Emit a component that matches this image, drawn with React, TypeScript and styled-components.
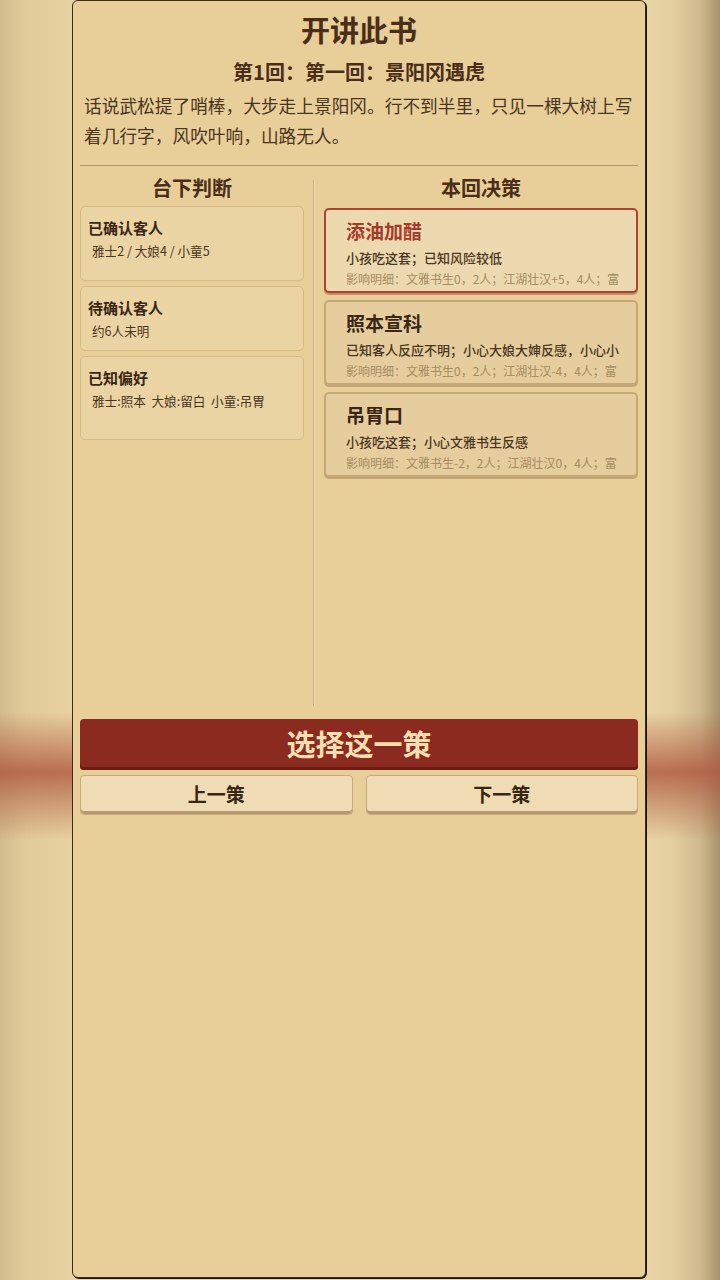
import React from "react";
import styled, { createGlobalStyle } from "styled-components";

const GlobalStyle = createGlobalStyle`
  html, body {
    margin: 0;
    padding: 0;
  }
  body {
    font-family: "Noto Sans CJK SC", "Noto Sans", sans-serif;
    color: #3f2a16;
  }
`;

const Page = styled.div`
  width: 720px;
  height: 1280px;
  overflow: hidden;
  background:
    linear-gradient(
      180deg,
      rgba(176, 88, 62, 0) 0px,
      rgba(176, 88, 62, 0) 712px,
      rgba(172, 82, 58, 0.78) 772px,
      rgba(176, 88, 62, 0) 840px,
      rgba(176, 88, 62, 0) 1280px
    ),
    linear-gradient(
      90deg,
      #d2bb8c 0px,
      #e2cb9b 26px,
      #e8d2a2 72px,
      #e9d4a5 646px,
      #e4cfa0 672px,
      #cfb98d 700px,
      #a8926a 720px
    );
`;

const Panel = styled.div`
  box-sizing: border-box;
  width: 574px;
  height: 1278px;
  margin: 0 0 0 72px;
  padding: 0 7px;
  background: #e8ce99;
  border: 1px solid #3d2a18;
  border-radius: 6px;
  box-shadow: 1px 1px 0 #1e140a;
  display: flex;
  flex-direction: column;
`;

const Title = styled.h1`
  margin: 10px 0 0;
  font-size: 29px;
  line-height: 36px;
  font-weight: 700;
  text-align: center;
  color: #4a2e18;
`;

const Subtitle = styled.h2`
  margin: 11px 0 0;
  font-size: 20px;
  line-height: 28px;
  font-weight: 700;
  text-align: center;
  color: #4a2e18;
`;

const Story = styled.p`
  margin: 4px 0 0;
  padding: 0 0 0 4px;
  font-size: 17.7px;
  line-height: 30px;
  color: #4a3520;
`;

const Rule = styled.hr`
  margin: 15px 0 0;
  border: none;
  height: 1px;
  background: #ab936b;
`;

const Columns = styled.div`
  display: grid;
  grid-template-columns: 224px 20px 314px;
  height: 530px;
  margin-top: 10px;
`;

const Column = styled.div<{ $gap: number }>`
  display: flex;
  flex-direction: column;
  gap: ${(p) => p.$gap}px;
`;

const Divider = styled.div`
  justify-self: center;
  width: 2px;
  margin-top: 4px;
  background: linear-gradient(90deg, #cfb282 0 1px, #ecd9ad 1px 2px);
`;

const ColumnHead = styled.h3`
  margin: 0 0 1px;
  font-size: 20px;
  line-height: 24px;
  font-weight: 700;
  text-align: center;
  color: #4a2e18;
`;

const InfoCard = styled.div<{ $minHeight: number }>`
  box-sizing: border-box;
  min-height: ${(p) => p.$minHeight}px;
  padding: 11px 7px 8px;
  background: #ebd4a3;
  border: 1px solid #d7bb87;
  border-radius: 5px;
`;

const InfoTitle = styled.div`
  font-size: 15px;
  line-height: 20px;
  font-weight: 700;
  color: #3a2614;
`;

const InfoBody = styled.div`
  margin-top: 4px;
  padding-left: 4px;
  font-size: 12.6px;
  line-height: 18px;
  color: #4a3520;
  white-space: pre;
`;

const PlanCard = styled.div<{ $selected?: boolean }>`
  box-sizing: border-box;
  height: 85px;
  padding: 9px 14px 0 20px;
  border-radius: 5px;
  border: 2px solid ${(p) => (p.$selected ? "#a9472e" : "#c5a878")};
  background: ${(p) => (p.$selected ? "#ecd9b0" : "#e5cd9d")};
  box-shadow: 0 2px 0 ${(p) => (p.$selected ? "#c98a66" : "#c2a676")};
  overflow: hidden;
`;

const PlanTitle = styled.div<{ $selected?: boolean }>`
  font-size: 19px;
  line-height: 24px;
  font-weight: 700;
  color: ${(p) => (p.$selected ? "#a63a28" : "#3a2614")};
`;

const PlanLine = styled.div<{ $muted?: boolean }>`
  margin-top: ${(p) => (p.$muted ? 4 : 6)}px;
  font-size: ${(p) => (p.$muted ? 12 : 13)}px;
  line-height: ${(p) => (p.$muted ? 16 : 18)}px;
  font-weight: ${(p) => (p.$muted ? 400 : 500)};
  color: ${(p) => (p.$muted ? "#a68c60" : "#4a3520")};
  white-space: nowrap;
`;

const PrimaryButton = styled.button`
  margin-top: 13px;
  height: 51px;
  border: none;
  border-radius: 4px;
  background: #8b2a1e;
  box-shadow: inset 0 -3px 0 #6a1d13;
  color: #f7dfb3;
  font-family: inherit;
  font-size: 29px;
  font-weight: 700;
  padding: 0 0 3px;
`;

const ButtonRow = styled.div`
  display: grid;
  grid-template-columns: 1fr 1fr;
  gap: 13px;
  margin-top: 5px;
`;

const SecondaryButton = styled.button`
  height: 40px;
  border: 1px solid #c6ab7c;
  border-radius: 4px;
  background: #efdcb4;
  box-shadow: inset 0 -3px 0 #b39a6e;
  color: #3a2614;
  font-family: inherit;
  font-size: 19px;
  font-weight: 700;
  padding: 0 0 3px;
`;

const info = [
  { title: "已确认客人", body: "雅士2 / 大娘4 / 小童5", h: 75 },
  { title: "待确认客人", body: "约6人未明", h: 65 },
  { title: "已知偏好", body: "雅士:照本  大娘:留白  小童:吊胃", h: 84 },
];

// the lines are shown as far as the card lets them run
const plans = [
  {
    title: "添油加醋",
    desc: "小孩吃这套；已知风险较低",
    detail: "影响明细：文雅书生0，2人；江湖壮汉+5，4人；富",
    selected: true,
  },
  {
    title: "照本宣科",
    desc: "已知客人反应不明；小心大娘大婶反感，小心小",
    detail: "影响明细：文雅书生0，2人；江湖壮汉-4，4人；富",
  },
  {
    title: "吊胃口",
    desc: "小孩吃这套；小心文雅书生反感",
    detail: "影响明细：文雅书生-2，2人；江湖壮汉0，4人；富",
  },
];

const App = () => {
  return (
    <Page>
      <GlobalStyle />
      <Panel>
        <Title>开讲此书</Title>
        <Subtitle>第1回：第一回：景阳冈遇虎</Subtitle>
        <Story>
          话说武松提了哨棒，大步走上景阳冈。行不到半里，只见一棵大树上写着几行字，风吹叶响，山路无人。
        </Story>
        <Rule />
        <Columns>
          <Column $gap={5}>
            <ColumnHead>台下判断</ColumnHead>
            {info.map((item) => (
              <InfoCard key={item.title} $minHeight={item.h}>
                <InfoTitle>{item.title}</InfoTitle>
                <InfoBody>{item.body}</InfoBody>
              </InfoCard>
            ))}
          </Column>
          <Divider />
          <Column $gap={7}>
            <ColumnHead>本回决策</ColumnHead>
            {plans.map((plan) => (
              <PlanCard key={plan.title} $selected={plan.selected}>
                <PlanTitle $selected={plan.selected}>{plan.title}</PlanTitle>
                <PlanLine>{plan.desc}</PlanLine>
                <PlanLine $muted>{plan.detail}</PlanLine>
              </PlanCard>
            ))}
          </Column>
        </Columns>
        <PrimaryButton>选择这一策</PrimaryButton>
        <ButtonRow>
          <SecondaryButton>上一策</SecondaryButton>
          <SecondaryButton>下一策</SecondaryButton>
        </ButtonRow>
      </Panel>
    </Page>
  );
};

export default App;
